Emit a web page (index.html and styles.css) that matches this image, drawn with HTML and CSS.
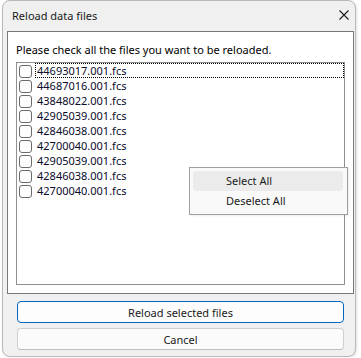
FILE: index.html
```html
<!DOCTYPE html>
<html>
<head>
<meta charset="utf-8">
<link rel="stylesheet" href="styles.css">
</head>
<body>
<div class="dialog">
  <div class="titlebar">
    <span class="title">Reload data files</span>
    <svg class="close" width="10" height="10" viewBox="0 0 10 10"><path d="M0.5 0.5 L9.5 9.5 M9.5 0.5 L0.5 9.5" stroke="#1b1b1b" stroke-width="1.1" fill="none"/></svg>
  </div>
  <div class="panel">
    <div class="prompt">Please check all the files you want to be reloaded.</div>
    <div class="listbox">
      <div class="item"><span class="cb"></span><span class="label focus">44693017.001.fcs</span></div>
      <div class="item"><span class="cb"></span><span class="label">44687016.001.fcs</span></div>
      <div class="item"><span class="cb"></span><span class="label">43848022.001.fcs</span></div>
      <div class="item"><span class="cb"></span><span class="label">42905039.001.fcs</span></div>
      <div class="item"><span class="cb"></span><span class="label">42846038.001.fcs</span></div>
      <div class="item"><span class="cb"></span><span class="label">42700040.001.fcs</span></div>
      <div class="item"><span class="cb"></span><span class="label">42905039.001.fcs</span></div>
      <div class="item"><span class="cb"></span><span class="label">42846038.001.fcs</span></div>
      <div class="item"><span class="cb"></span><span class="label">42700040.001.fcs</span></div>
    </div>
  </div>
  <div class="buttons">
    <button class="btn primary">Reload selected files</button>
    <button class="btn">Cancel</button>
  </div>
  <div class="menu">
    <div class="menu-item hover">Select All</div>
    <div class="menu-item">Deselect All</div>
  </div>
</div>
</body>
</html>
```
FILE: styles.css
```css
*, *::before, *::after {
  box-sizing: border-box;
}
html, body {
  margin: 0;
  padding: 0;
  background: #ffffff;
}
body {
  font-family: "Noto Sans", "Liberation Sans", sans-serif;
  font-size: 11px;
  color: #1a1a1a;
}
.dialog {
  position: relative;
  margin-left: 2px;
  width: 354px;
  height: 357px;
  border: 1px solid #b9b9b9;
  border-radius: 8px;
  background: #f0f0f0;
  display: flex;
  flex-direction: column;
  box-shadow: 1px 1px 3px rgba(0,0,0,0.12);
}
.titlebar {
  height: 30px;
  flex: none;
  display: flex;
  align-items: center;
  justify-content: space-between;
  padding: 0 6px 2px 9px;
  border-radius: 8px 8px 0 0;
}
.title {
  font-size: 11px;
  color: #1a1a1a;
}
.close {
  display: block;
}
.panel {
  flex: none;
  margin: 0 1px 0 4px;
  height: 263px;
  border: 1px solid #777777;
  background: #ffffff;
  padding: 0 8px 8px 8px;
  display: flex;
  flex-direction: column;
}
.prompt {
  height: 30px;
  line-height: 36px;
  white-space: nowrap;
  color: #000;
}
.listbox {
  flex: 1;
  border: 1px solid #8f8f8f;
  padding: 0 0 0 1px;
  display: flex;
  flex-direction: column;
}
.item {
  height: 15px;
  flex: none;
  display: flex;
  align-items: center;
}
.cb {
  width: 13px;
  height: 13px;
  border: 1px solid #6b6b6b;
  border-radius: 3px;
  background: #fdfdfd;
  margin-left: 1px;
  margin-top: 1px;
  flex: none;
}
.label {
  display: block;
  margin-left: 3px;
  padding: 1px 0 0 1px;
  height: 15px;
  line-height: 12px;
  border: 1px solid transparent;
  color: #0b0b2a;
  white-space: nowrap;
}
.label.focus {
  flex: 1;
  margin-right: 0;
  border: 1px dotted #000;
}
.buttons {
  flex: none;
  padding: 7px 11px 0 14px;
  display: flex;
  flex-direction: column;
  gap: 5px;
}
.btn {
  height: 22px;
  font-family: "Noto Sans", "Liberation Sans", sans-serif;
  font-size: 11px;
  color: #1a1a1a;
  background: #fbfbfb;
  border: 1px solid #d0d0d0;
  border-bottom-color: #bdbdbd;
  border-radius: 4px;
  padding: 0;
}
.btn.primary {
  border: 1px solid #0067c0;
  background: #fdfdfd;
}
.menu {
  position: absolute;
  left: 186px;
  top: 166px;
  width: 159px;
  padding: 3px 4px 3px 3px;
  background: #f9f9f9;
  border: 1px solid #a0a0a0;
  box-shadow: 1px 1px 2px rgba(0,0,0,0.08);
}
.menu-item {
  height: 20px;
  line-height: 20px;
  padding-left: 33px;
  border-radius: 4px;
  color: #1a1a1a;
}
.menu-item.hover {
  background: #ebebeb;
}
```
